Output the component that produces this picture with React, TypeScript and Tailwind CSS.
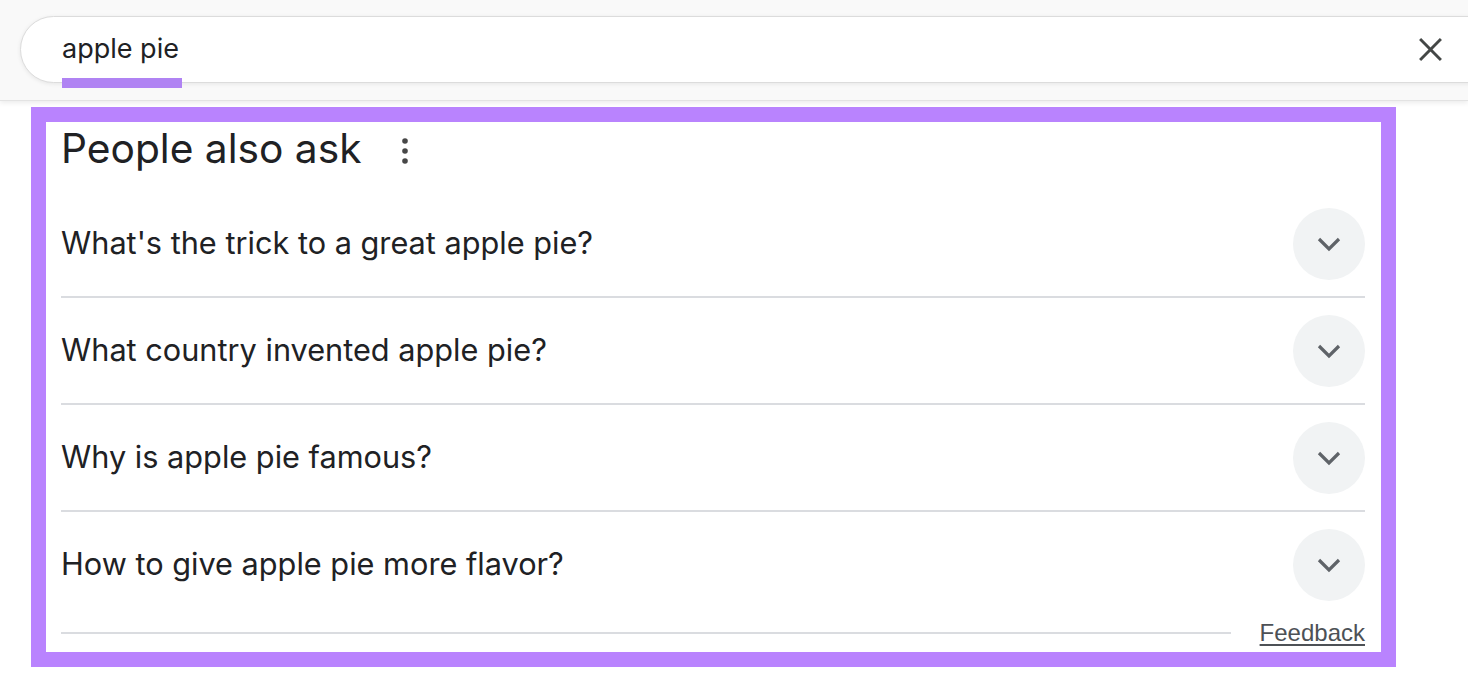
import React from "react";

const questions = [
  "What's the trick to a great apple pie?",
  "What country invented apple pie?",
  "Why is apple pie famous?",
  "How to give apple pie more flavor?",
];

function Chevron() {
  return (
    <div className="w-[72px] h-[72px] rounded-full bg-[#f1f3f4] flex items-center justify-center shrink-0">
      <svg width="26" height="26" viewBox="0 0 26 26">
        <path d="M3 8 L13 18 L23 8" fill="none" stroke="#5f6368" strokeWidth="3.2" />
      </svg>
    </div>
  );
}

export default function App() {
  return (
    <div
      className="w-[1468px] h-[684px] bg-white overflow-hidden"
      style={{ fontFamily: "Inter, Roboto, 'Noto Sans', sans-serif" }}
    >
      <div className="h-[101px] bg-[#f9f9f9] border-b border-[#e3e3e3] shadow-[0_2px_5px_rgba(0,0,0,0.08)] pt-[16px] pl-[20px] overflow-hidden">
        <div className="relative w-[1500px] h-[67px] rounded-l-[34px] bg-white border border-[#dcdcdc] shadow-[0_1px_4px_rgba(0,0,0,0.08)] flex items-center">
          <span className="ml-[41px] mb-[2px] text-[27px] text-[#202124] leading-none">apple pie</span>
          <div className="absolute left-[41px] top-[61px] w-[120px] h-[10px] bg-[#b083f3]" />
          <svg
            className="absolute left-[1397px] top-[20px]"
            width="25"
            height="25"
            viewBox="0 0 24 24"
          >
            <path d="M2 2 L22 22 M22 2 L2 22" stroke="#444746" strokeWidth="2.8" fill="none" />
          </svg>
        </div>
      </div>

      <div className="ml-[31px] mt-[6px] w-[1365px] h-[560px] border-[15px] border-[#b983fe] pl-[15px] pr-[16px] flex flex-col">
        <div className="h-[69px] flex items-center pb-[14px]">
          <span className="text-[40.7px] text-[#202124] leading-none">People also ask</span>
          <svg className="ml-[38px] mt-[2px]" width="10" height="28" viewBox="0 0 10 28">
            <circle cx="5" cy="4" r="2.8" fill="#474747" />
            <circle cx="5" cy="14" r="2.8" fill="#474747" />
            <circle cx="5" cy="24" r="2.8" fill="#474747" />
          </svg>
        </div>
        {questions.map((q, i) => (
          <div
            key={q}
            className={
              i < 3
                ? "h-[107px] flex items-center justify-between border-b-2 border-[#dadce0]"
                : "h-[106px] flex items-center justify-between"
            }
          >
            <span className="text-[30.7px] text-[#202124] leading-none pb-[1px]">{q}</span>
            <Chevron />
          </div>
        ))}
        <div className="h-[30px] flex items-center">
          <div className="flex-1 h-[2px] bg-[#dadce0]" />
          <span
            className="ml-[29px] text-[24px] text-[#4d5156] underline decoration-2 underline-offset-[3px] leading-none"
            style={{ fontFamily: "'Liberation Sans', Arial, sans-serif" }}
          >
            Feedback
          </span>
        </div>
      </div>
    </div>
  );
}
